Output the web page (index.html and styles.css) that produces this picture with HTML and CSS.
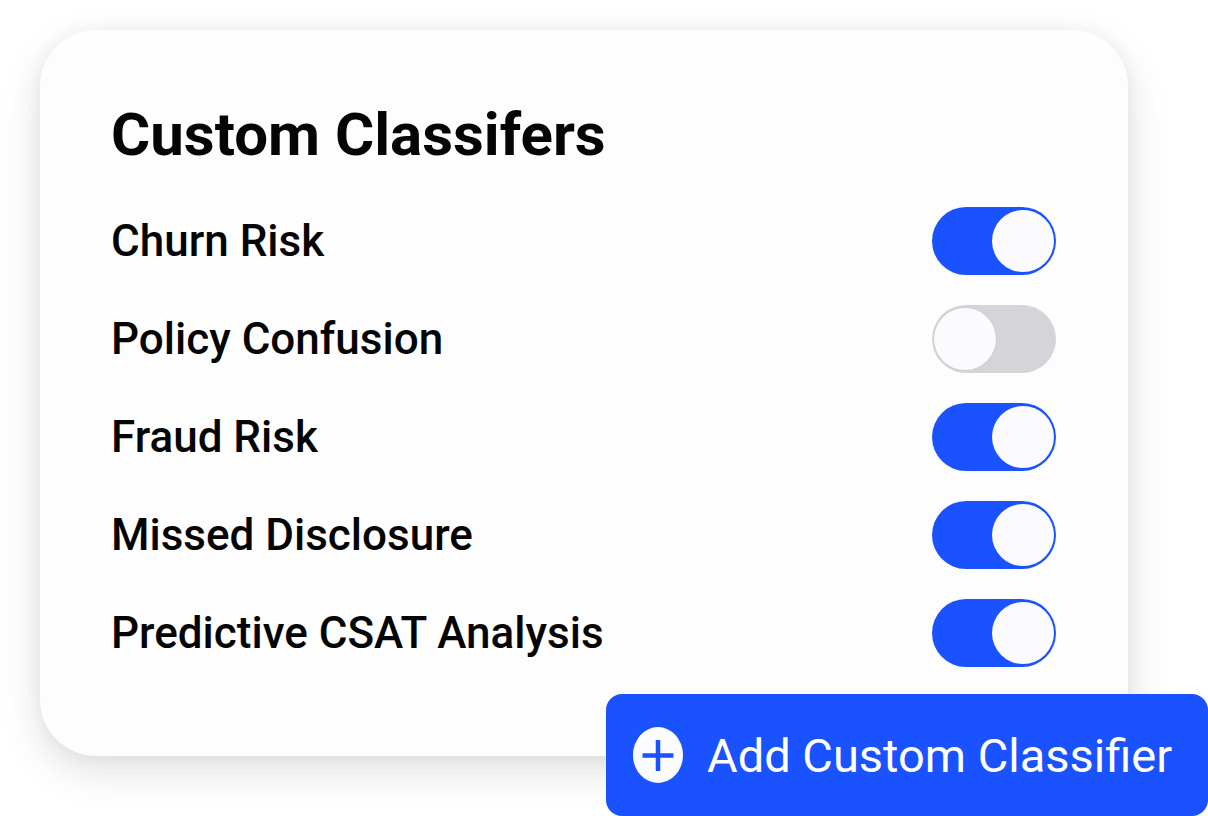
FILE: index.html
```html
<!DOCTYPE html>
<html lang="en">
<head>
<meta charset="utf-8">
<title>Custom Classifers</title>
<link rel="stylesheet" href="styles.css">
</head>
<body>
<div class="stage">
  <section class="card">
    <h1 class="title">Custom Classifers</h1>
    <ul class="list">
      <li class="row"><span class="label">Churn Risk</span><span class="toggle on"><span class="knob"></span></span></li>
      <li class="row"><span class="label">Policy Confusion</span><span class="toggle off"><span class="knob"></span></span></li>
      <li class="row"><span class="label">Fraud Risk</span><span class="toggle on"><span class="knob"></span></span></li>
      <li class="row"><span class="label">Missed Disclosure</span><span class="toggle on"><span class="knob"></span></span></li>
      <li class="row"><span class="label">Predictive CSAT Analysis</span><span class="toggle on"><span class="knob"></span></span></li>
    </ul>
  </section>
  <button class="add-btn" type="button">
    <svg class="plus" width="50" height="56" viewBox="0 0 50 56" aria-hidden="true">
      <ellipse cx="25" cy="28" rx="25" ry="28" fill="#fcfcff"/>
      <path d="M25 13v31M9.5 28.5h31" stroke="#1a52ff" stroke-width="4.5" fill="none"/>
    </svg>
    <span class="btn-text">Add Custom Classifier</span>
  </button>
</div>
</body>
</html>
```
FILE: styles.css
```css
* { box-sizing: border-box; }
html, body {
  margin: 0;
  padding: 0;
  background: #ffffff;
  width: 1208px;
  height: 816px;
  overflow: hidden;
  font-family: Roboto, "Liberation Sans", Arial, sans-serif;
}
.stage {
  position: relative;
  width: 1208px;
  height: 816px;
  padding: 30px 0 0 40px;
}
.card {
  width: 1088px;
  height: 726px;
  background: #fdfdfe;
  border-radius: 56px;
  box-shadow: 0 14px 40px rgba(0, 0, 0, 0.13), 0 0 18px rgba(0, 0, 0, 0.04);
  padding: 70px 72px 0 71px;
}
.title {
  margin: 0 0 22px;
  font-size: 60px;
  line-height: 70px;
  font-weight: 700;
  color: #050505;
  letter-spacing: 0;
}
.list {
  list-style: none;
  margin: 0;
  padding: 0;
  display: flex;
  flex-direction: column;
}
.row {
  height: 98px;
  display: flex;
  align-items: center;
  justify-content: space-between;
}
.label {
  font-size: 44px;
  line-height: 52px;
  font-weight: 500;
  color: #050505;
}
.toggle {
  width: 124px;
  height: 68px;
  border-radius: 34px;
  padding: 3px;
  display: flex;
  align-items: center;
}
.toggle.on {
  background: #1a52ff;
  justify-content: flex-end;
  padding-right: 2px;
}
.toggle.off {
  background: #d5d4d8;
  justify-content: flex-start;
  padding-left: 2px;
}
.knob {
  width: 62px;
  height: 62px;
  border-radius: 50%;
  background: #fbfbfe;
}
.toggle.off .knob {
  box-shadow: 0 0 0 1px #cdccd0;
}
.add-btn {
  position: absolute;
  left: 606px;
  top: 694px;
  width: 602px;
  height: 122px;
  border: 0;
  border-radius: 16px;
  background: #1a52ff;
  color: #ffffff;
  display: flex;
  align-items: center;
  gap: 24px;
  padding: 0 0 0 27px;
  font-family: Roboto, "Liberation Sans", Arial, sans-serif;
  cursor: pointer;
}
.plus { display: block; flex: none; }
.btn-text {
  font-size: 47px;
  font-weight: 400;
  line-height: 1;
  color: #ffffff;
}
```
